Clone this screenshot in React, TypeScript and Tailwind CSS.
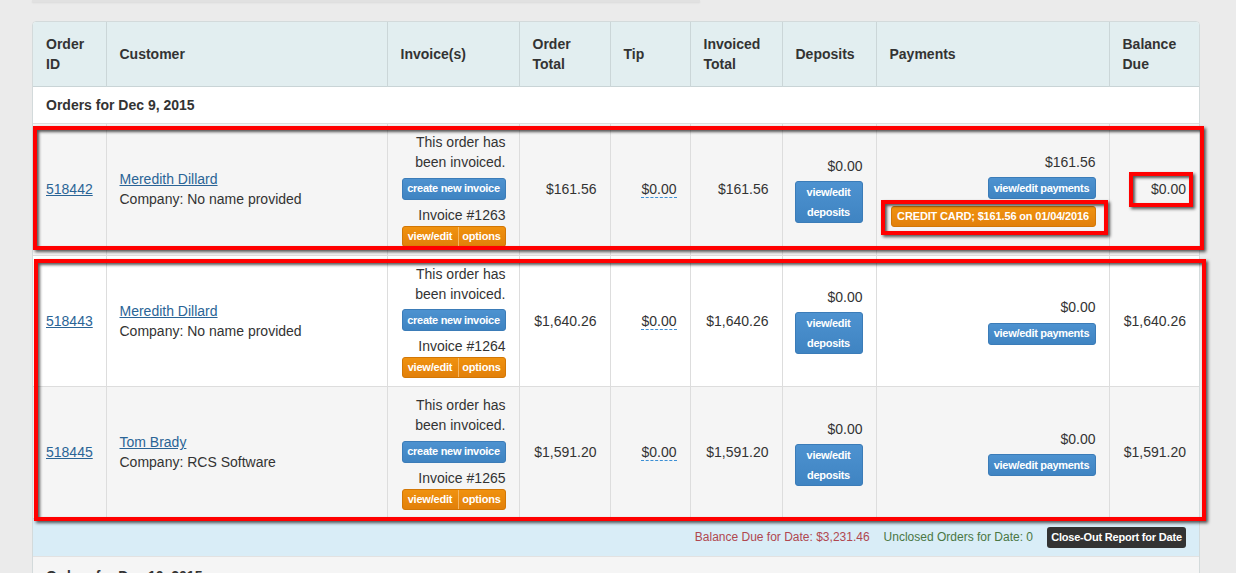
import React from "react";

type Order = {
  id: string;
  name: string;
  company: string;
  inv: string;
  total: string;
  invoiced: string;
  paid: string;
  credit: boolean;
  bal: string;
  bg: string;
};

const orders: Order[] = [
  { id: "518442", name: "Meredith Dillard", company: "No name provided", inv: "1263", total: "$161.56", invoiced: "$161.56", paid: "$161.56", credit: true, bal: "$0.00", bg: "bg-[#f5f5f5]" },
  { id: "518443", name: "Meredith Dillard", company: "No name provided", inv: "1264", total: "$1,640.26", invoiced: "$1,640.26", paid: "$0.00", credit: false, bal: "$1,640.26", bg: "bg-white" },
  { id: "518445", name: "Tom Brady", company: "RCS Software", inv: "1265", total: "$1,591.20", invoiced: "$1,591.20", paid: "$0.00", credit: false, bal: "$1,591.20", bg: "bg-[#f5f5f5]" },
];

const td = "border-r border-[#dddddd] px-[13px] py-[8px] align-middle";
const tdLast = "px-[13px] py-[8px] align-middle";
const th = "border-r border-[#cbd6d8] px-[13px] py-[12px] text-left font-bold align-middle";
const thLast = "px-[13px] py-[12px] text-left font-bold align-middle";

const blueBase =
  "inline-flex items-center justify-center rounded-[3px] border border-[#3b7cb8] bg-gradient-to-b from-[#4d92d0] to-[#3f84c2] text-white font-bold text-[11px] tracking-[-0.3px] whitespace-nowrap";
const blueBtn = blueBase + " leading-none";
const orangeBg = "bg-gradient-to-b from-[#f0920f] to-[#e2800a]";

function RedBox({ cls }: { cls: string }) {
  return (
    <div
      className={
        "pointer-events-none absolute border-[4px] border-[#ff0000] shadow-[2px_2px_3px_rgba(0,0,0,0.65),inset_2px_2px_3px_rgba(0,0,0,0.65)] " +
        cls
      }
    />
  );
}

export default function App() {
  return (
    <div className="relative min-h-screen bg-[#ebebeb] font-['Liberation_Sans',Arial,sans-serif] text-[#333333]">
      <div className="ml-[32px] h-[2px] w-[668px] bg-[#e1e1e1] shadow-[0_1px_2px_rgba(0,0,0,0.08)]" />
      <div className="ml-[32px] mt-[19px] w-[1168px] overflow-hidden rounded-t-[4px] border border-[#d3dadb] bg-white">
        <table className="w-full table-fixed border-collapse text-[14px] leading-[20px]">
          <colgroup>
            <col className="w-[73px]" />
            <col className="w-[281px]" />
            <col className="w-[132px]" />
            <col className="w-[91px]" />
            <col className="w-[80px]" />
            <col className="w-[92px]" />
            <col className="w-[94px]" />
            <col className="w-[233px]" />
            <col className="w-[90px]" />
          </colgroup>
          <thead>
            <tr className="border-b border-[#c9d4d6] bg-[#e2eef0]">
              <th className={th}>Order<br />ID</th>
              <th className={th}>Customer</th>
              <th className={th}>Invoice(s)</th>
              <th className={th}>Order<br />Total</th>
              <th className={th}>Tip</th>
              <th className={th}>Invoiced<br />Total</th>
              <th className={th}>Deposits</th>
              <th className={th}>Payments</th>
              <th className={thLast}>Balance<br />Due</th>
            </tr>
          </thead>
          <tbody>
            <tr className="border-b border-[#dddddd] bg-white">
              <td colSpan={9} className="px-[13px] py-[8px] font-bold">Orders for Dec 9, 2015</td>
            </tr>
            {orders.map((o) => (
              <tr key={o.id} className={"border-b border-[#dddddd] " + o.bg}>
                <td className={td}>
                  <a href="#" className="text-[#2a6496] underline">{o.id}</a>
                </td>
                <td className={td}>
                  <a href="#" className="text-[#2a6496] underline">{o.name}</a>
                  <div>Company: {o.company}</div>
                </td>
                <td className={td + " text-right"}>
                  <div className="flex flex-col items-end">
                    <div>This order has<br />been invoiced.</div>
                    <div className="mt-[5px]">
                      <span className={blueBtn + " h-[22px] w-[104px]"}>create new invoice</span>
                    </div>
                    <div className="mt-[5px]">Invoice #{o.inv}</div>
                    <div className={"mt-[1px] flex h-[21px] w-[104px] overflow-hidden rounded-[3px] border border-[#d27706] text-[11px] font-bold leading-none tracking-[-0.2px] text-white " + orangeBg}>
                      <span className="flex w-[56px] items-center justify-center border-r border-[#f6b661] whitespace-nowrap">view/edit</span>
                      <span className="flex flex-1 items-center justify-center whitespace-nowrap">options</span>
                    </div>
                  </div>
                </td>
                <td className={td + " text-right"}>{o.total}</td>
                <td className={td + " text-right"}>
                  <span className="border-b border-dashed border-[#3b8fd5]">$0.00</span>
                </td>
                <td className={td + " text-right"}>{o.invoiced}</td>
                <td className={td + " text-right"}>
                  <div className="flex flex-col items-end">
                    <div>$0.00</div>
                    <div className={blueBase + " mt-[5px] h-[42px] w-[68px] flex-col leading-[20px]"}>
                      <span className="block leading-[20px]">view/edit</span>
                      <span className="block leading-[20px]">deposits</span>
                    </div>
                  </div>
                </td>
                <td className={td + " text-right"}>
                  <div className="flex flex-col items-end">
                    <div>{o.paid}</div>
                    <div className="mt-[5px]">
                      <span className={blueBtn + " h-[22px] w-[108px]"}>view/edit payments</span>
                    </div>
                    {o.credit && (
                      <div className="mt-[6px]">
                        <span className={"inline-flex h-[21px] w-[205px] items-center justify-center whitespace-nowrap rounded-[3px] border border-[#d27706] text-[11px] font-bold leading-none tracking-[-0.15px] text-white " + orangeBg}>
                          CREDIT CARD; $161.56 on 01/04/2016
                        </span>
                      </div>
                    )}
                  </div>
                </td>
                <td className={tdLast + " text-right"}>{o.bal}</td>
              </tr>
            ))}
            <tr className="border-b border-[#e2e2e2] bg-[#d9edf7]">
              <td colSpan={9} className="px-[13px] py-[8px]">
                <div className="flex items-center justify-end text-[12px]">
                  <span className="text-[#b0474f]">Balance Due for Date: $3,231.46</span>
                  <span className="ml-[14px] text-[#4a7743]">Unclosed Orders for Date: 0</span>
                  <span className="ml-[14px] inline-flex h-[21px] w-[139px] items-center justify-center whitespace-nowrap rounded-[3px] bg-[#333333] text-[11px] font-bold leading-none tracking-[-0.2px] text-white">
                    Close-Out Report for Date
                  </span>
                </div>
              </td>
            </tr>
            <tr className="bg-[#f5f5f5]">
              <td colSpan={9} className="px-[13px] pt-[9px] pb-[10px] font-bold">Orders for Dec 10, 2015</td>
            </tr>
          </tbody>
        </table>
      </div>

      <RedBox cls="left-[33px] top-[126px] h-[124px] w-[1171px]" />
      <RedBox cls="left-[34px] top-[259px] h-[262px] w-[1172px]" />
      <RedBox cls="left-[1129px] top-[172px] h-[35px] w-[64px]" />
      <RedBox cls="left-[881px] top-[200px] h-[35px] w-[227px]" />
    </div>
  );
}
